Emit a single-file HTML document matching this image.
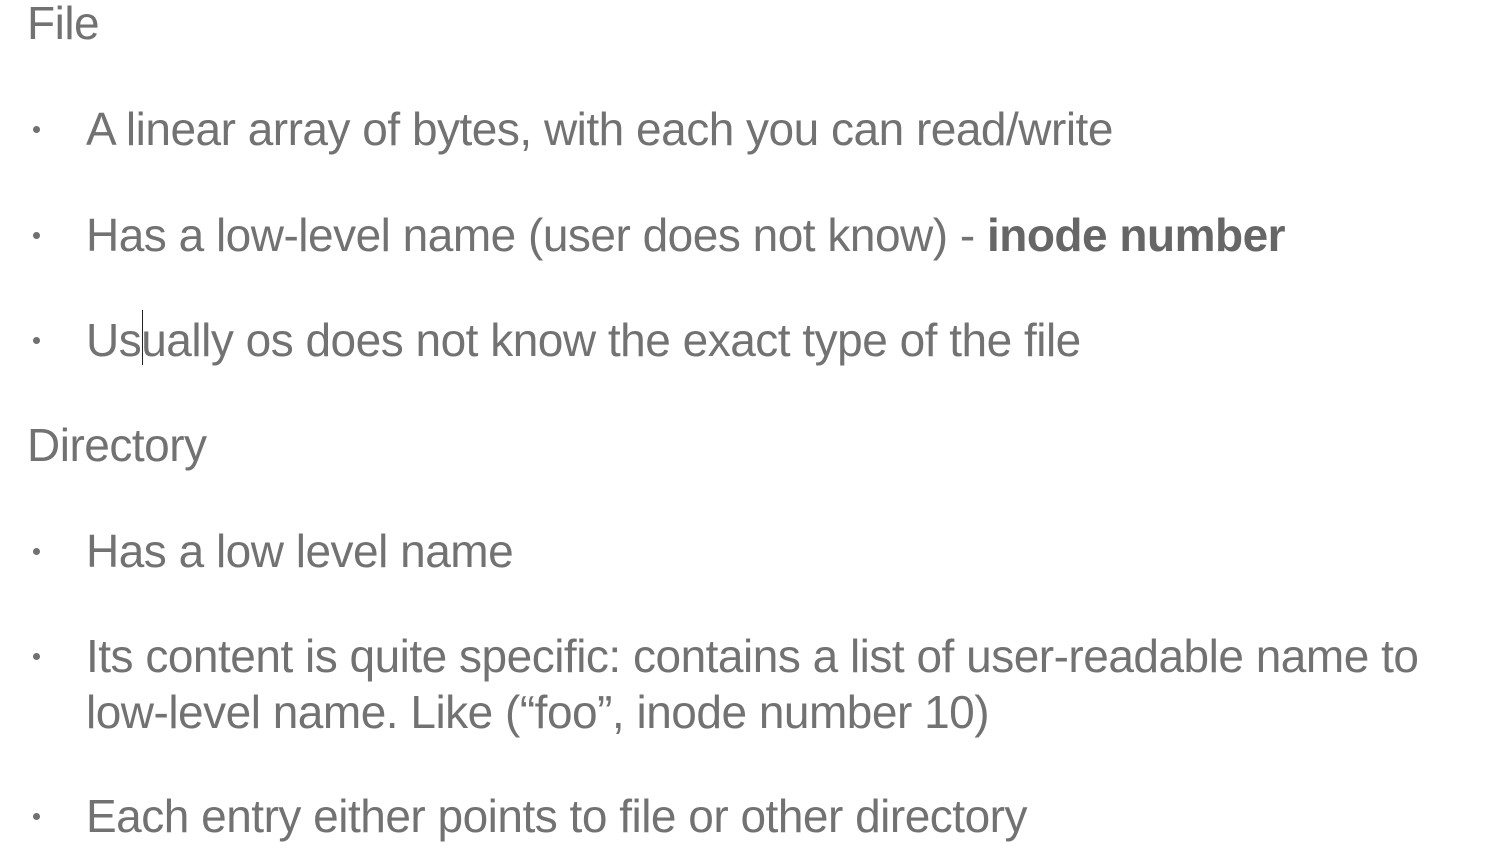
<!DOCTYPE html>
<html><head><style>
body{margin:0;width:1486px;height:860px;background:#fff;overflow:hidden;font-family:"Liberation Sans",sans-serif;color:#727272;}
.t{position:absolute;font-size:46px;line-height:46px;letter-spacing:-0.5px;white-space:nowrap;}
.b{position:absolute;width:7px;height:7px;border-radius:50%;background:#707070;left:33px;}
</style></head><body>
<div class="t" style="left:27px;top:0px">File</div>
<div class="b" style="top:126px"></div><div class="t" style="left:86px;top:106px">A linear array of bytes, with each you can read/write</div>
<div class="b" style="top:232px"></div><div class="t" style="left:86px;top:212px">Has a low-level name (user does not know) - <b style="color:#666">inode number</b></div>
<div class="b" style="top:337px"></div><div class="t" style="left:86px;top:317px">Usually os does not know the exact type of the file</div>
<div style="position:absolute;left:142px;top:310px;width:1px;height:55px;background:#222"></div>
<div class="t" style="left:27px;top:422px">Directory</div>
<div class="b" style="top:548px"></div><div class="t" style="left:86px;top:528px">Has a low level name</div>
<div class="b" style="top:653px"></div><div class="t" style="left:86px;top:633px">Its content is quite specific: contains a list of user-readable name to</div>
<div class="t" style="left:86px;top:689px">low-level name. Like (“foo”, inode number 10)</div>
<div class="b" style="top:813px"></div><div class="t" style="left:86px;top:793px">Each entry either points to file or other directory</div>
</body></html>
